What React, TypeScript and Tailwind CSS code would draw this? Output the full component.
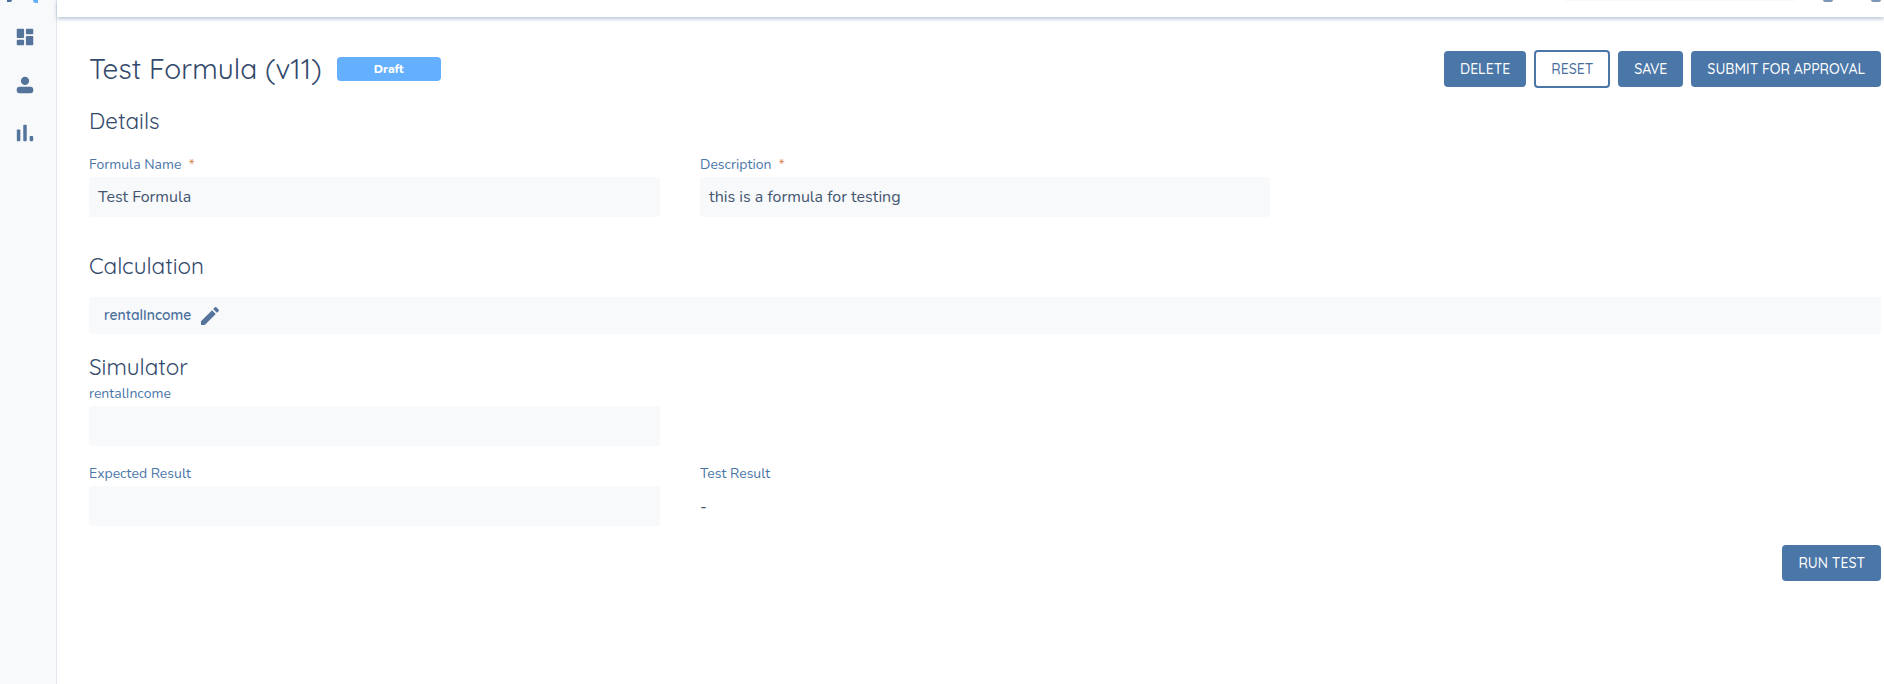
import React from "react";

const Q = "font-['Quicksand','Lato','Noto_Sans',sans-serif]";

function Field({ label, required, value, className = "w-[571px]" }: { label: string; required?: boolean; value?: string; className?: string }) {
  return (
    <div className={className}>
      <div className="h-[19px] text-[14px] leading-[19px] text-[#4a76a8]">
        {label}
        {required && <span className="ml-[7px] text-[#d98a5b]">*</span>}
      </div>
      <div className="mt-[3px] flex h-[40px] items-center rounded-[4px] bg-[#f7f9fb] px-[9px] text-[16px] text-[#44566f]">{value}</div>
    </div>
  );
}

function Btn({ children, outline }: { children: React.ReactNode; outline?: boolean }) {
  return (
    <button
      className={
        outline
          ? `${Q} h-[38px] rounded-[4px] border-2 border-[#4a76a8] bg-white px-[15px] text-[14px] font-medium text-[#4a6f9c]`
          : `${Q} h-[36px] rounded-[4px] bg-[#4a76a8] px-[16px] text-[14px] font-medium text-white`
      }
    >
      {children}
    </button>
  );
}

export default function App() {
  return (
    <div className="flex h-[684px] w-[1884px] overflow-hidden bg-white font-['Nunito','Lato',sans-serif]">
      <aside className="flex w-[57px] shrink-0 flex-col items-center border-r border-[#e3e8ee] bg-[#f7f9fb] pr-[6px]">
        <div className="flex h-[21px] w-full justify-between pl-[7px] pr-[12px]">
          <span className="h-[2px] w-[5px] rounded-br bg-[#4a6f9c]" />
          <span className="h-[3px] w-[5px] rounded-bl bg-[#64b0ff]" />
        </div>
        <svg className="mt-[5px]" width="22" height="22" viewBox="0 0 24 24" fill="#54749b">
          <path d="M4 3h6a1 1 0 0 1 1 1v8a1 1 0 0 1-1 1H4a1 1 0 0 1-1-1V4a1 1 0 0 1 1-1zM4 15h6a1 1 0 0 1 1 1v4a1 1 0 0 1-1 1H4a1 1 0 0 1-1-1v-4a1 1 0 0 1 1-1zM14 3h6a1 1 0 0 1 1 1v4a1 1 0 0 1-1 1h-6a1 1 0 0 1-1-1V4a1 1 0 0 1 1-1zM14 11h6a1 1 0 0 1 1 1v8a1 1 0 0 1-1 1h-6a1 1 0 0 1-1-1v-8a1 1 0 0 1 1-1z" />
        </svg>
        <svg className="mt-[26px]" width="22" height="22" viewBox="0 0 24 24" fill="#54749b">
          <circle cx="12" cy="7.500" r="4.500" />
          <rect x="3" y="14" width="18" height="7" rx="3" />
        </svg>
        <svg className="mt-[23px]" width="28" height="28" viewBox="0 0 24 24" fill="#54749b">
          <rect x="5" y="9" width="3" height="10" rx="0.700" />
          <rect x="10.500" y="5" width="3" height="14" rx="0.700" />
          <rect x="16" y="14.500" width="3" height="4.500" rx="0.700" />
        </svg>
      </aside>

      <div className="flex min-w-0 flex-1 flex-col">
        <header className="flex h-[17px] shrink-0 items-start justify-end bg-white pr-[3px] shadow-[0_2px_4px_rgba(74,111,156,0.4)]">
          <span className="mr-[28px] h-[1px] w-[230px] bg-[#f7f8fa]" />
          <span className="mr-[38px] h-[2px] w-[10px] rounded-b-full bg-[#7c97b8]" />
          <span className="h-[2px] w-[10px] rounded-b-full bg-[#7c97b8]" />
        </header>

        <main className="flex flex-col pl-[32px] pr-[3px] pt-[33px]">
          <div className="flex h-[38px] items-center justify-between">
            <div className="flex items-center">
              <h1 className={`${Q} text-[28px] leading-[38px] tracking-[0.05px] text-[#32496b]`}>Test Formula (v11)</h1>
              <span className="ml-[15px] flex h-[24px] w-[104px] items-center justify-center rounded-[4px] bg-[#64b0ff] text-[12px] font-extrabold text-white">
                Draft
              </span>
            </div>
            <div className="flex items-center gap-[8px]">
              <Btn>DELETE</Btn>
              <Btn outline>RESET</Btn>
              <Btn>SAVE</Btn>
              <Btn>SUBMIT FOR APPROVAL</Btn>
            </div>
          </div>

          <h2 className={`${Q} mt-[19px] text-[22.4px] leading-[28px] text-[#32496b]`}>Details</h2>

          <div className="mt-[20px] flex gap-[40px]">
            <Field label="Formula Name" required value="Test Formula" />
            <Field label="Description" required value="this is a formula for testing" className="w-[570px]" />
          </div>

          <h2 className={`${Q} mt-[35px] text-[22.4px] leading-[28px] text-[#32496b]`}>Calculation</h2>

          <div className="mt-[17px] flex h-[37px] items-center rounded-[4px] bg-[#f7f9fb] pl-[15px]">
            <span className={`${Q} w-[86px] text-[13.8px] font-semibold text-[#4a6f9c]`}>rentalIncome</span>
            <svg className="ml-[8px]" width="24" height="24" viewBox="0 0 24 24" fill="#54749b">
              <path d="M3 17.250V21h3.750L17.810 9.940l-3.750-3.750L3 17.250zM20.710 7.040a1 1 0 0 0 0-1.410l-2.340-2.340a1 1 0 0 0-1.410 0l-1.830 1.830 3.750 3.750 1.830-1.830z" />
            </svg>
          </div>

          <h2 className={`${Q} mt-[19px] text-[22.4px] leading-[28px] text-[#32496b]`}>Simulator</h2>

          <Field label="rentalIncome" className="mt-[3px] w-[571px]" />

          <div className="mt-[18px] flex gap-[40px]">
            <Field label="Expected Result" />
            <div className="w-[570px]">
              <div className="h-[19px] text-[14px] leading-[19px] text-[#4a76a8]">Test Result</div>
              <div className="mt-[4px] flex h-[40px] items-center text-[16px] text-[#44566f]">-</div>
            </div>
          </div>

          <div className="mt-[18px] flex justify-end">
            <Btn>RUN TEST</Btn>
          </div>
        </main>
      </div>
    </div>
  );
}
